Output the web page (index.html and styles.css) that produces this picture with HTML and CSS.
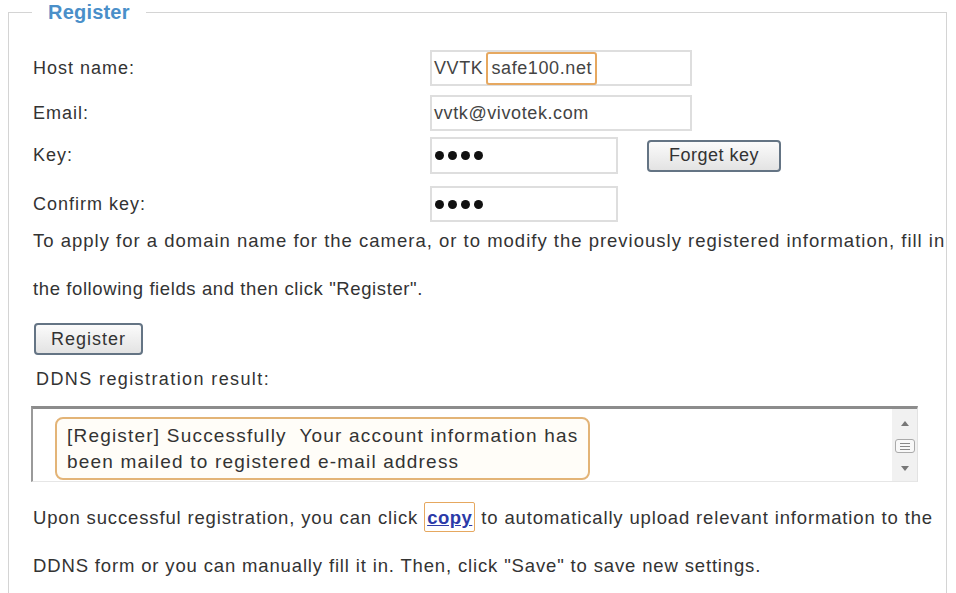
FILE: index.html
```html
<!DOCTYPE html>
<html lang="en">
<head>
    <meta charset="UTF-8">
    <meta name="viewport" content="width=device-width, initial-scale=1.0">
    <title>DDNS Register</title>
    <link rel="stylesheet" href="styles.css">
</head>
<body>
    <fieldset class="register">
        <legend>Register</legend>

        <div class="form">
            <div class="row">
                <span class="label">Host name:</span>
                <div class="field wide">VVTK<span class="mark">safe100.net</span></div>
            </div>
            <div class="row">
                <span class="label">Email:</span>
                <div class="field wide">vvtk@vivotek.com</div>
            </div>
            <div class="row row-key">
                <span class="label">Key:</span>
                <div class="field short dots"><i></i><i></i><i></i><i></i></div>
                <button class="btn forget-btn">Forget key</button>
            </div>
            <div class="row row-confirm">
                <span class="label">Confirm key:</span>
                <div class="field short dots"><i></i><i></i><i></i><i></i></div>
            </div>
        </div>

        <p class="note note-apply">To apply for a domain name for the camera, or to modify the previously registered information, fill in<br><span class="tight">the following fields and then click "Register".</span></p>

        <button class="btn register-btn">Register</button>

        <div class="result-label">DDNS registration result:</div>

        <div class="result">
            <div class="result-text">
                <div class="msg">[Register] Successfully&nbsp; Your account information has<br>been mailed to registered e-mail address</div>
            </div>
            <div class="scrollbar">
                <svg width="8" height="5" viewBox="0 0 8 5"><path d="M0 5 L4 0 L8 5 Z" fill="#777"/></svg>
                <span class="thumb"><b></b><b></b><b></b></span>
                <svg width="8" height="5" viewBox="0 0 8 5"><path d="M0 0 L4 5 L8 0 Z" fill="#777"/></svg>
            </div>
        </div>

        <p class="note note-copy">Upon successful registration, you can click <a class="copy" href="#">copy</a> to automatically upload relevant information to the<br>DDNS form or you can manually fill it in. Then, click "Save" to save new settings.</p>
    </fieldset>
</body>
</html>
```

FILE: styles.css
```css
body {
    margin: 0;
    font-family: "Liberation Sans", Arial, sans-serif;
    color: #333;
    background-color: #fff;
}

.register {
    margin: 0 9px 0 8px;
    padding: 0 0 60px 23px;
    border: 1px solid #d4d4d4;
    min-height: 600px;
}

.register legend {
    padding: 0 16px;
    font-size: 20px;
    line-height: 24px;
    font-weight: bold;
    letter-spacing: 0.2px;
    color: #4a8fc9;
}

.form {
    display: flex;
    flex-direction: column;
    gap: 9px;
    margin-top: 26px;
}

.row {
    display: flex;
    align-items: center;
    height: 36px;
}

.row-key {
    margin-top: -3px;
    height: 37px;
}

.row-confirm {
    margin-top: 3px;
}

.label {
    width: 397px;
    padding-left: 1px;
    font-size: 18px;
    letter-spacing: 1px;
}

.field {
    display: flex;
    align-items: center;
    box-sizing: border-box;
    height: 100%;
    padding-left: 2px;
    border: 2px solid #dedede;
    font-size: 18px;
    letter-spacing: 0.6px;
    color: #444;
}

.wide {
    width: 262px;
}

.short {
    width: 188px;
}

.mark {
    display: flex;
    align-items: center;
    height: 33px;
    box-sizing: border-box;
    margin-left: 3px;
    padding: 0 3px;
    border: 2px solid #e6a860;
    border-radius: 3px;
}

.dots {
    gap: 4px;
    padding-left: 3px;
}

.dots i {
    width: 9px;
    height: 9px;
    border-radius: 50%;
    background-color: #111;
}

.btn {
    box-sizing: border-box;
    height: 32px;
    border: 2px solid #647484;
    border-radius: 4px;
    background: linear-gradient(#fbfbfb, #e3e3e3);
    font-family: "Liberation Sans", Arial, sans-serif;
    font-size: 18px;
    letter-spacing: 0.5px;
    color: #333;
    cursor: pointer;
}

.forget-btn {
    width: 134px;
    margin-left: 29px;
}

.note {
    margin: 0;
    padding-left: 1px;
    font-size: 18.5px;
    line-height: 48px;
    letter-spacing: 1px;
    white-space: nowrap;
}

.note-apply {
    margin-top: -5px;
}

.tight {
    letter-spacing: 0.6px;
}

.register-btn {
    display: block;
    width: 109px;
    margin: 10px 0 0 2px;
    letter-spacing: 1px;
}

.result-label {
    margin: 13px 0 0 4px;
    font-size: 18px;
    line-height: 22px;
    letter-spacing: 1.4px;
}

.result {
    display: flex;
    box-sizing: border-box;
    width: 887px;
    height: 76px;
    margin: 16px 0 0 -1px;
    border-top: 3px solid #8c8c8c;
    border-left: 2px solid #9a9a9a;
    border-right: 1px solid #e2e2e2;
    border-bottom: 1px solid #e6e6e6;
}

.result-text {
    flex: 1;
    padding: 8px 0 0 22px;
}

.msg {
    box-sizing: border-box;
    width: 535px;
    height: 63px;
    padding: 4px 10px;
    border: 2px solid #e3b477;
    border-radius: 8px;
    background-color: #fffdf8;
    font-size: 19px;
    line-height: 26px;
    letter-spacing: 1.2px;
    white-space: nowrap;
    color: #333;
}

.scrollbar {
    display: flex;
    flex-direction: column;
    align-items: center;
    justify-content: space-between;
    width: 25px;
    padding: 12px 0 10px;
    background-color: #f1f1f1;
}

.thumb {
    display: flex;
    flex-direction: column;
    justify-content: center;
    gap: 2px;
    box-sizing: border-box;
    width: 20px;
    height: 14px;
    border: 1px solid #aaa;
    border-radius: 3px;
    background-color: #f8f8f8;
}

.thumb b {
    display: block;
    height: 1px;
    margin: 0 4px;
    background-color: #888;
}

.note-copy {
    margin-top: 12px;
    letter-spacing: 0.85px;
}

.copy {
    padding: 4px 2px 3px;
    border: 1.5px solid #e6a860;
    border-radius: 2px;
    color: #2b3aa8;
    font-weight: bold;
    letter-spacing: 0.5px;
}
```
